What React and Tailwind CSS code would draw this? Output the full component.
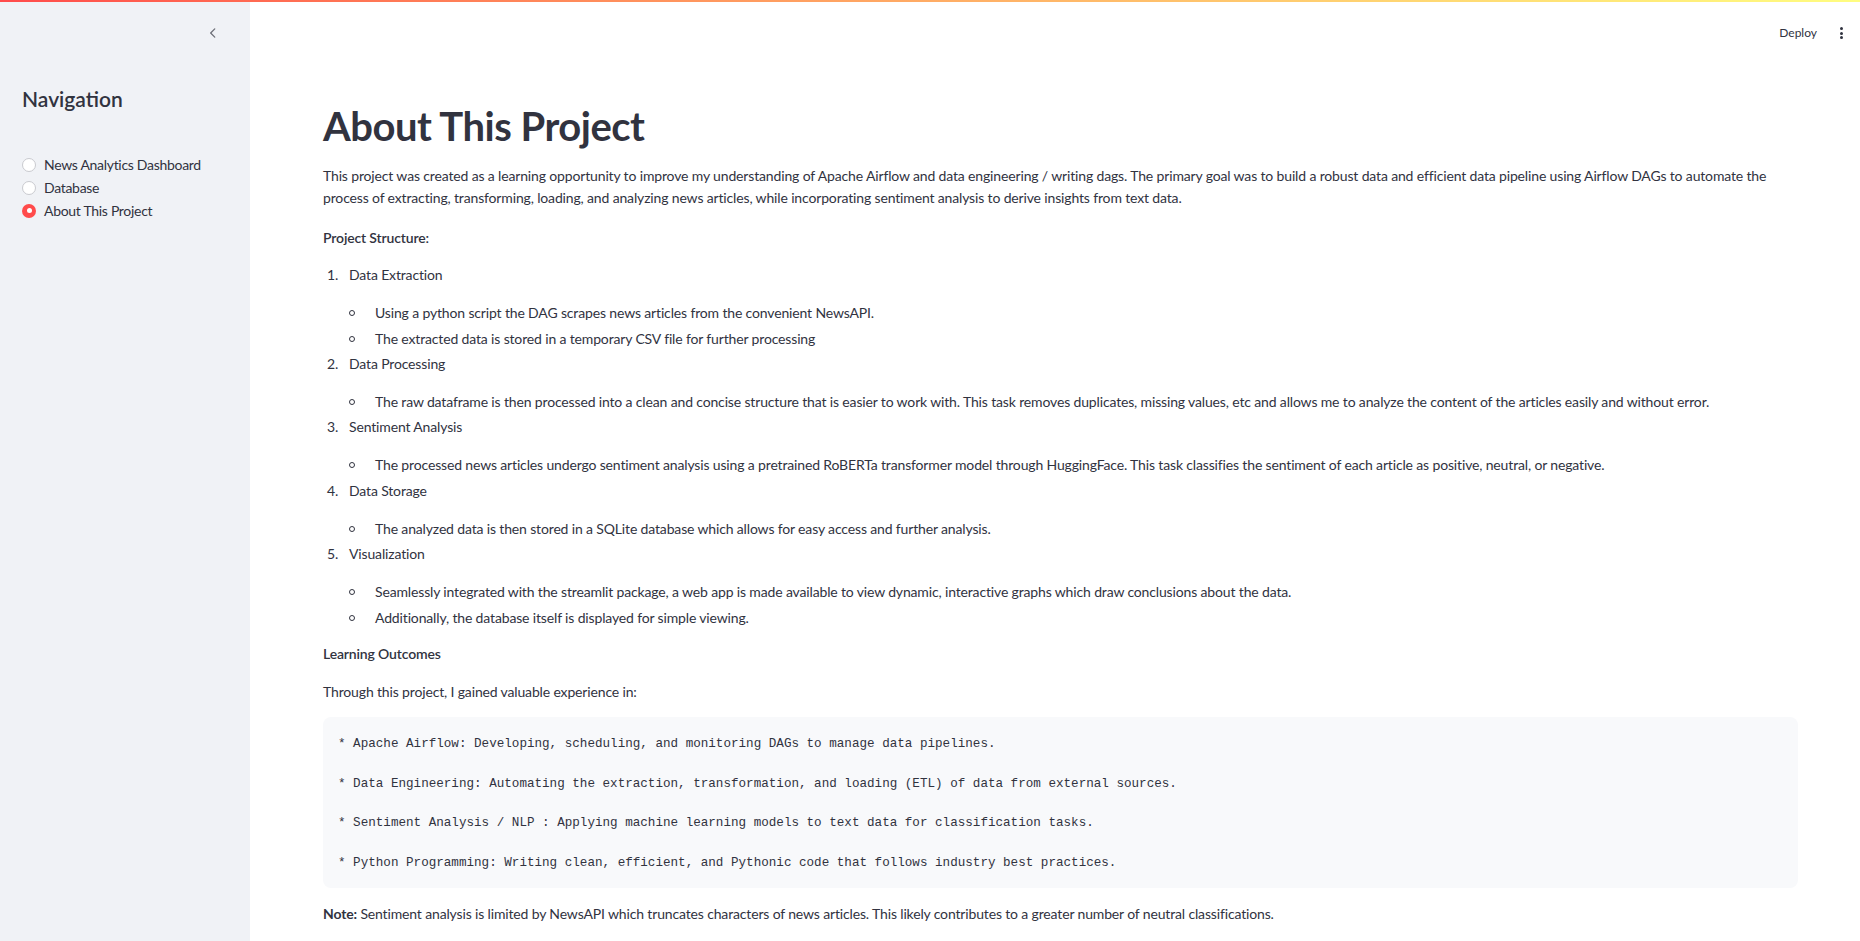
import React from "react";

const FONT = { fontFamily: "Lato, 'Noto Sans', sans-serif" };
const MONO = { fontFamily: "'Liberation Mono', 'DejaVu Sans Mono', monospace" };

function Radio({ checked, label }) {
  return (
    <div className="flex items-center h-[23px]">
      {checked ? (
        <span className="w-[14px] h-[14px] rounded-full bg-[#ff4b4b] flex items-center justify-center ml-[22px]">
          <span className="w-[5px] h-[5px] rounded-full bg-white" />
        </span>
      ) : (
        <span className="w-[14px] h-[14px] rounded-full bg-white border border-[#c9cacf] ml-[22px]" />
      )}
      <span className="ml-[8px] text-[14px] tracking-[-0.3px] text-[#31333f]">{label}</span>
    </div>
  );
}

function Bullet({ children, mt }) {
  return (
    <div className={`flex items-center leading-[22.4px] ${mt}`}>
      <span className="ml-[26px] w-[6px] h-[6px] rounded-full border border-[#31333f] shrink-0" />
      <span className="ml-[20px]">{children}</span>
    </div>
  );
}

function Item({ n, children, mt }) {
  return (
    <div className={`flex leading-[22.4px] ${mt}`}>
      <span className="ml-[4px] w-[22px]">{n}.</span>
      <span>{children}</span>
    </div>
  );
}

export default function App() {
  return (
    <div className="relative w-[1860px] h-[941px] overflow-hidden bg-white flex text-[#31333f]" style={FONT}>
      <div className="absolute top-0 left-0 right-0 h-[2px] bg-gradient-to-r from-[#ff4b4b] to-[#fffd80] z-10" />
      {/* Sidebar */}
      <aside className="w-[250px] h-full bg-[#f0f2f6] flex flex-col shrink-0">
        <div className="h-[66px] flex items-center justify-end pr-[30px]">
          <svg width="14" height="14" viewBox="0 0 24 24" fill="none" stroke="#6b6d76" strokeWidth="2.2" strokeLinecap="round" strokeLinejoin="round">
            <path d="M15 5l-7 7 7 7" />
          </svg>
        </div>
        <h2 className="ml-[22px] mt-[19px] text-[21px] font-semibold leading-[28px] text-[#31333f]">Navigation</h2>
        <div className="mt-[40px] flex flex-col">
          <Radio label="News Analytics Dashboard" />
          <Radio label="Database" />
          <Radio checked label="About This Project" />
        </div>
      </aside>

      {/* Main */}
      <main className="flex-1 flex flex-col">
        <header className="h-[64px] pt-[2px] flex items-center justify-end pr-[17px] gap-[22px]">
          <span className="text-[12px] text-[#31333f]">Deploy</span>
          <span className="flex flex-col gap-[1.5px] items-center w-[4px]">
            <span className="w-[3px] h-[3px] rounded-full bg-[#31333f]" />
            <span className="w-[3px] h-[3px] rounded-full bg-[#31333f]" />
            <span className="w-[3px] h-[3px] rounded-full bg-[#31333f]" />
          </span>
        </header>
        <div className="pl-[73px] pr-[62px] pt-[39px] text-[14px] tracking-[-0.15px]">
          <h1 className="text-[40px] font-bold leading-[46px] tracking-[-0.5px] text-[#31333f]">About This Project</h1>
          <p className="mt-[16px] leading-[22.4px] whitespace-nowrap">
            This project was created as a learning opportunity to improve my understanding of Apache Airflow and data engineering / writing dags. The primary goal was to build a robust data and efficient data pipeline using Airflow DAGs to automate the
            <br />
            process of extracting, transforming, loading, and analyzing news articles, while incorporating sentiment analysis to derive insights from text data.
          </p>
          <p className="mt-[16.7px] leading-[22.4px] font-semibold">Project Structure:</p>
          <Item n={1} mt="mt-[14.6px]">Data Extraction</Item>
          <Bullet mt="mt-[15.6px]">Using a python script the DAG scrapes news articles from the convenient NewsAPI.</Bullet>
          <Bullet mt="mt-[3.6px]">The extracted data is stored in a temporary CSV file for further processing</Bullet>
          <Item n={2} mt="mt-[2.6px]">Data Processing</Item>
          <Bullet mt="mt-[15.6px]">The raw dataframe is then processed into a clean and concise structure that is easier to work with. This task removes duplicates, missing values, etc and allows me to analyze the content of the articles easily and without error.</Bullet>
          <Item n={3} mt="mt-[2.6px]">Sentiment Analysis</Item>
          <Bullet mt="mt-[15.6px]">The processed news articles undergo sentiment analysis using a pretrained RoBERTa transformer model through HuggingFace. This task classifies the sentiment of each article as positive, neutral, or negative.</Bullet>
          <Item n={4} mt="mt-[3.6px]">Data Storage</Item>
          <Bullet mt="mt-[15.6px]">The analyzed data is then stored in a SQLite database which allows for easy access and further analysis.</Bullet>
          <Item n={5} mt="mt-[2.6px]">Visualization</Item>
          <Bullet mt="mt-[15.6px]">Seamlessly integrated with the streamlit package, a web app is made available to view dynamic, interactive graphs which draw conclusions about the data.</Bullet>
          <Bullet mt="mt-[3.6px]">Additionally, the database itself is displayed for simple viewing.</Bullet>
          <p className="mt-[13.6px] leading-[22.4px] font-semibold">Learning Outcomes</p>
          <p className="mt-[15.6px] leading-[22.4px]">Through this project, I gained valuable experience in:</p>
          <div className="mt-[14px] h-[171px] bg-[#f8f9fb] rounded-[8px] pl-[15px] pt-[18px] text-[12.6px] leading-[19.8px] tracking-normal text-[#31333f]" style={MONO}>
            <div className="whitespace-pre">* Apache Airflow: Developing, scheduling, and monitoring DAGs to manage data pipelines.</div>
            <div className="h-[19.8px]" />
            <div className="whitespace-pre">* Data Engineering: Automating the extraction, transformation, and loading (ETL) of data from external sources.</div>
            <div className="h-[19.8px]" />
            <div className="whitespace-pre">* Sentiment Analysis / NLP : Applying machine learning models to text data for classification tasks.</div>
            <div className="h-[19.8px]" />
            <div className="whitespace-pre">* Python Programming: Writing clean, efficient, and Pythonic code that follows industry best practices.</div>
          </div>
          <p className="mt-[14.8px] leading-[22.4px]">
            <span className="font-bold">Note:</span> Sentiment analysis is limited by NewsAPI which truncates characters of news articles. This likely contributes to a greater number of neutral classifications.
          </p>
        </div>
      </main>
    </div>
  );
}
